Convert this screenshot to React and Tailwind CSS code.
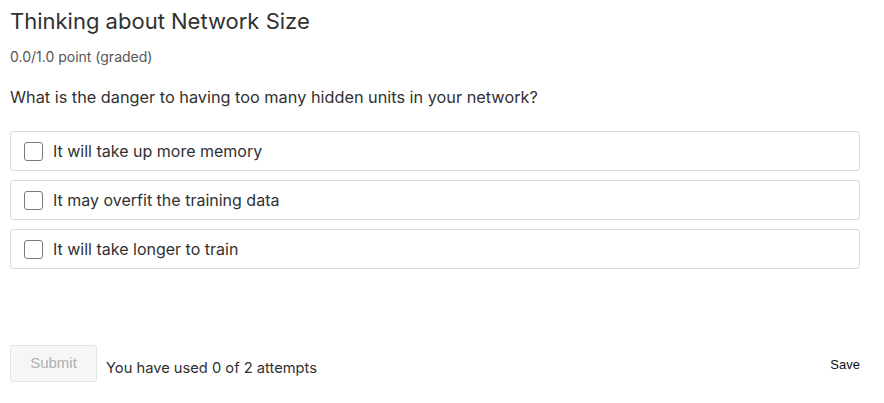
import React from "react";

const options = [
  "It will take up more memory",
  "It may overfit the training data",
  "It will take longer to train",
];

const Option = ({ label }) => (
  <label className="flex items-center h-[40px] px-[13px] border border-[#dcdcdc] rounded-[3px] bg-white cursor-pointer">
    <span className="w-[19px] h-[19px] border border-[#7a7a7a] rounded-[3px] bg-white shrink-0" />
    <span className="ml-[10px] text-[16px] text-[#313131]">{label}</span>
  </label>
);

export default function App() {
  return (
    <div className="w-[884px] h-[403px] bg-white px-[10px] font-['Inter',sans-serif] text-[#313131] flex flex-col">
      <h2 className="mt-[7px] text-[22px] leading-[28px] font-normal">Thinking about Network Size</h2>
      <div className="mt-[13px] text-[14px] leading-[18px] text-[#555]">0.0/1.0 point (graded)</div>
      <p className="mt-[20px] text-[16.3px] leading-[22px]">
        What is the danger to having too many hidden units in your network?
      </p>

      <div className="mt-[23px] w-[850px] flex flex-col gap-[9px]">
        {options.map((o, i) => (
          <Option key={i} label={o} />
        ))}
      </div>

      <div className="mt-[76px] w-[850px] flex items-center">
        <button
          disabled
          className="w-[87px] h-[37px] bg-[#f6f6f6] border border-[#e4e4e4] text-[#b0b0b0] text-[15px] font-['Liberation_Sans',sans-serif] rounded-[2px]"
        >
          Submit
        </button>
        <span className="ml-[9px] mt-[10px] text-[14.7px] text-[#313131]">You have used 0 of 2 attempts</span>
        <span className="ml-auto text-[13px] text-[#111] font-['Liberation_Sans',sans-serif] mt-[2px]">Save</span>
      </div>
    </div>
  );
}
